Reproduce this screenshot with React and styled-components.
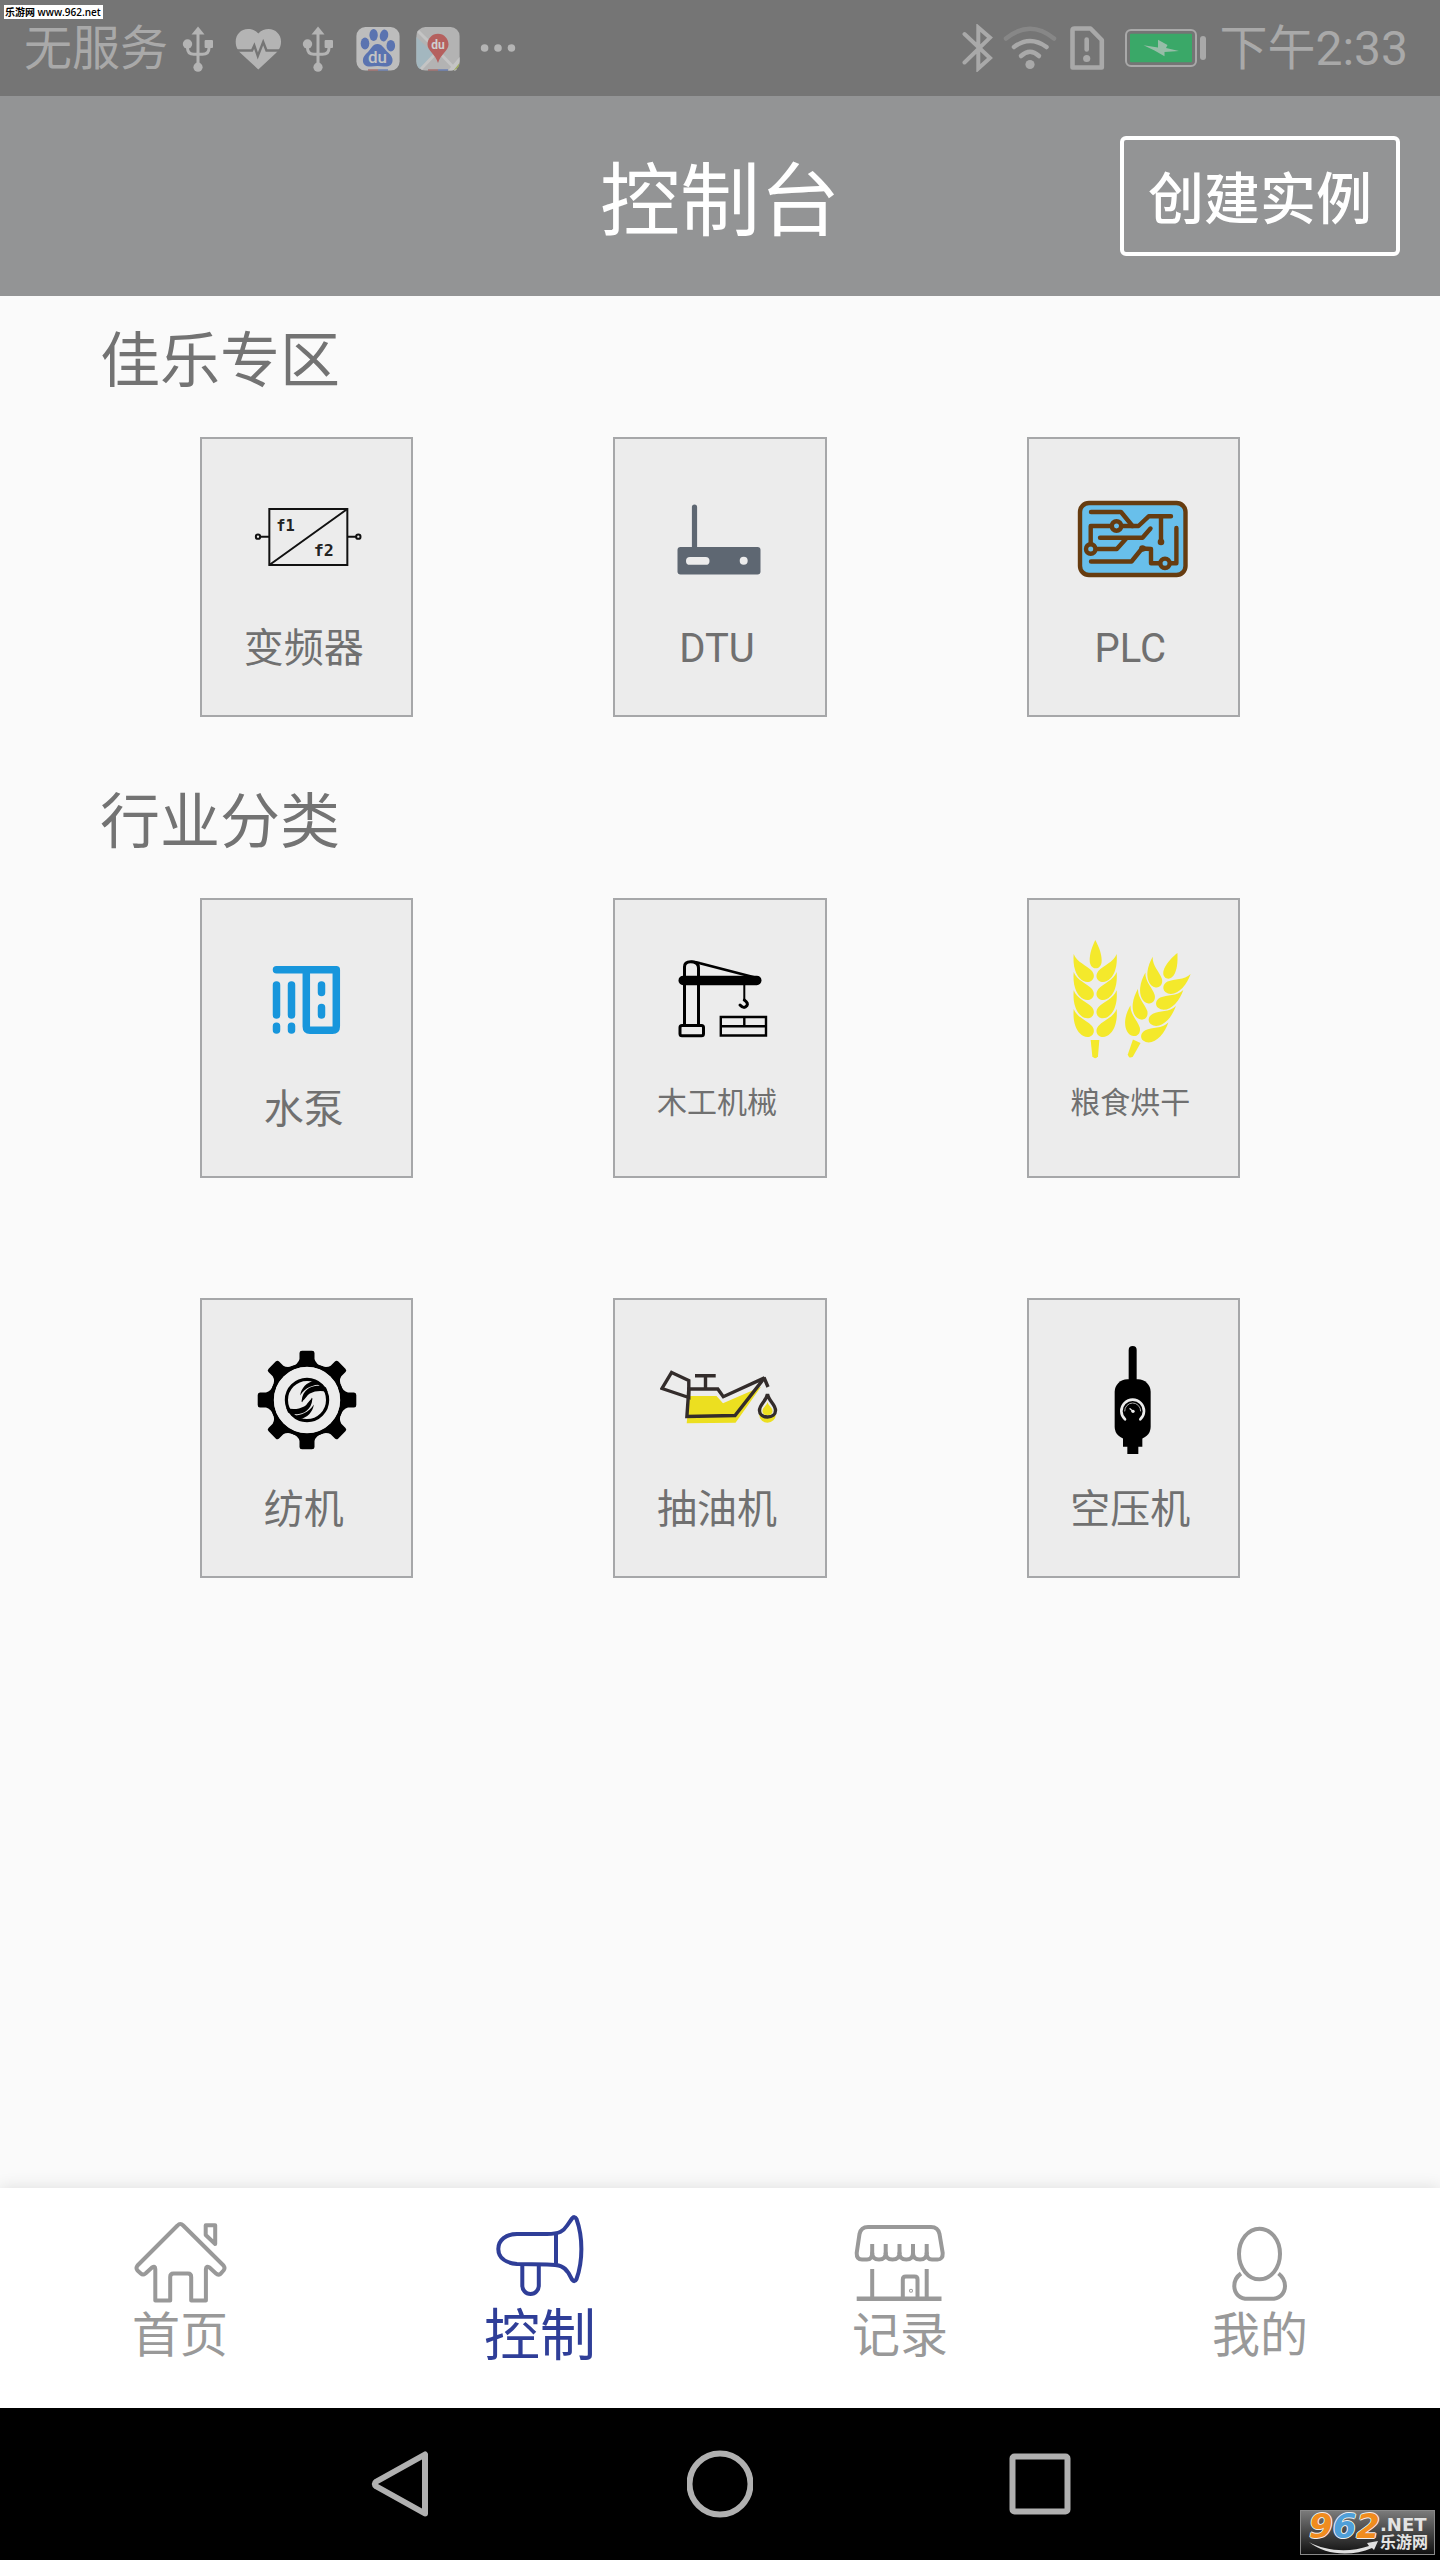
import React, { useState } from 'react';
import styled, { createGlobalStyle } from 'styled-components';

const GlobalStyle = createGlobalStyle`
    body {
        margin: 0;
        background-color: #fafafa;
        font-family: Roboto, "Noto Sans CJK SC", sans-serif;
    }
    button {
        font-family: inherit;
        cursor: pointer;
    }
`;

/* ---------- status bar icons ---------- */
function UsbIcon() {
    return (
        <StatusIcon width="48" height="48" viewBox="0 0 48 48">
            <path d="M24 2.5L30.5 10.5H17.5Z" fill="#b4b4b4" />
            <path d="M24 8V42M13.5 20V24Q13.5 30.3 20 30.3H28.5Q35 30.3 35 24V20" fill="none" stroke="#b4b4b4" strokeWidth="3" />
            <circle cx="13.5" cy="20" r="4.7" fill="#b4b4b4" />
            <rect x="30.6" y="16" width="8.4" height="8" rx="1" fill="#b4b4b4" />
            <circle cx="24" cy="43.2" r="4.6" fill="#b4b4b4" />
        </StatusIcon>
    );
}
function HeartIcon() {
    return (
        <StatusIcon width="48" height="48" viewBox="0 0 48 48">
            <path d="M24.3 9.5C21 6 17.5 5 14 5C7 5 1.7 10.5 1.7 17.5C1.7 23 3.5 26 7 29.5L24.3 45.5L41.5 29.5C45 26 47 23 47 17.5C47 10.5 41.5 5 34.5 5C31 5 27.5 6 24.3 9.5Z" fill="#b4b4b4" />
            <path d="M0 26.5H18L20.3 21.5L23.8 32L29.2 18L32.5 26.5H48" fill="none" stroke="#757575" strokeWidth="2.4" />
        </StatusIcon>
    );
}
function BaiduIcon() {
    return (
        <StatusIcon width="48" height="48" viewBox="0 0 48 48">
            <rect x="2.4" y="3" width="43.2" height="43.6" rx="9" fill="#bdbdbd" />
            <ellipse cx="11" cy="19.5" rx="4.3" ry="6" fill="#5a73b0" />
            <ellipse cx="19.6" cy="11" rx="4.2" ry="6" fill="#5a73b0" />
            <ellipse cx="30" cy="11.5" rx="4.2" ry="6" fill="#5a73b0" transform="rotate(12 30 11.5)" />
            <ellipse cx="36.8" cy="21.7" rx="4.3" ry="5.8" fill="#5a73b0" />
            <path d="M23.5 20C28 20 30 24.5 33 27.5C37 31 39 33.5 38.5 37C38 41.5 34.5 43 30 42.5C26 41.8 21 41.8 17 42.5C12.5 43 9 41 8.9 36.5C8.9 33 11 31 14 28C17 25 18.5 20 23.5 20Z" fill="#5a73b0" />
            <text x="23.5" y="39" fontSize="17" fontWeight="500" textAnchor="middle" fill="#c4c4c4">du</text>
            <path d="M14 46H24" stroke="#a0605f" strokeWidth="1.2" />
            <path d="M24 46H34" stroke="#5a73b0" strokeWidth="1.2" />
        </StatusIcon>
    );
}
function BaiduMapIcon() {
    return (
        <StatusIcon width="48" height="48" viewBox="0 0 48 48">
            <rect x="2.4" y="3" width="43.2" height="43.6" rx="9" fill="#b3b3b3" />
            <path d="M2.4 13L20 30L6 45Q2.4 43 2.4 37Z" fill="#a3b7bf" />
            <path d="M4 7L24 27L42 46M24 27L7 45" fill="none" stroke="#c4c4c4" strokeWidth="3" />
            <path d="M45.6 33L34 46.6H38Q45.6 45 45.6 37Z" fill="#c4c4c4" />
            <path d="M45.5 39Q45 44.5 39.5 46.5Z" fill="#9dab5e" />
            <path d="M24 9.7C30 9.7 34.5 14.5 34.5 20.5C34.5 27 26.5 30 24 39C21.5 30 13.5 27 13.5 20.5C13.5 14.5 18 9.7 24 9.7Z" fill="#b5605e" />
            <text x="24" y="24.5" fontSize="12" fontWeight="700" textAnchor="middle" fill="#cfcfcf">du</text>
            <path d="M14 46H24" stroke="#a0605f" strokeWidth="1.2" />
            <path d="M24 46H34" stroke="#5a73b0" strokeWidth="1.2" />
        </StatusIcon>
    );
}
function MoreIcon() {
    return (
        <StatusIcon width="48" height="48" viewBox="0 0 48 48" fill="#b4b4b4">
            <circle cx="10.6" cy="24" r="3.8" />
            <circle cx="24" cy="24" r="3.8" />
            <circle cx="37.4" cy="24" r="3.8" />
        </StatusIcon>
    );
}
function BluetoothIcon() {
    return (
        <StatusIcon width="48" height="48" viewBox="0 0 48 48">
            <path d="M11.5 10L37 34L25.3 44.5V3.5L37 13.7L11.5 38.5" fill="none" stroke="#a9a9a9" strokeWidth="4" strokeLinecap="round" />
        </StatusIcon>
    );
}
function WifiIcon() {
    return (
        <StatusIcon width="58" height="48" viewBox="0 0 58 48">
            <g fill="none" strokeWidth="4.5" strokeLinecap="round">
                <path d="M5 14.5Q29 -5 53 14.5" stroke="#878787" />
                <path d="M13 23Q29 11 45.5 23" stroke="#a9a9a9" />
                <path d="M20 32Q29 23.5 38 32" stroke="#a9a9a9" />
            </g>
            <circle cx="29" cy="40.5" r="4.6" fill="#a9a9a9" />
        </StatusIcon>
    );
}
function SimIcon() {
    return (
        <StatusIcon width="56" height="48" viewBox="0 0 56 48">
            <path d="M15.5 4.5H31.5L42.8 16V43.5H13.5V6.5Q13.5 4.5 15.5 4.5Z" fill="none" stroke="#a9a9a9" strokeWidth="4.6" strokeLinejoin="round" />
            <path d="M27.7 15.5V25.5" stroke="#a9a9a9" strokeWidth="4.6" strokeLinecap="round" />
            <circle cx="27.7" cy="34.5" r="3.6" fill="#a9a9a9" />
        </StatusIcon>
    );
}
function BatteryIcon() {
    return (
        <StatusIcon width="100" height="48" viewBox="0 0 100 48">
            <rect x="11" y="6" width="70" height="36" rx="5" fill="none" stroke="#a9a9a9" strokeWidth="2" />
            <rect x="15" y="9.7" width="62" height="28.5" rx="1" fill="#3aa868" />
            <path d="M28.5 21.3L43 23.5V15.7L52.5 21L51 24L64 27L49.5 28V32.2L39.5 26.5Z" fill="#97bda8" />
            <rect x="85" y="12" width="6" height="24" rx="3" fill="#a9a9a9" />
        </StatusIcon>
    );
}

/* ---------- category icons ---------- */
function InverterIcon() {
    return (
        <CardIcon viewBox="170 147 360 360">
            <g fill="none" stroke="#111" strokeWidth="6">
                <rect x="237" y="237" width="234" height="168" />
                <path d="M237 405L471 237M210 320H237M471 320H497" />
                <circle cx="203" cy="320" r="6.5" />
                <circle cx="504" cy="320" r="6.5" />
            </g>
            <text x="258" y="304" fontFamily="DejaVu Sans Mono" fontWeight="700" fontSize="46" fill="#222">f1</text>
            <text x="370" y="379" fontFamily="DejaVu Sans Mono" fontWeight="700" fontSize="50" fill="#222">f2</text>
        </CardIcon>
    );
}
function RouterIcon() {
    return (
        <CardIcon viewBox="0 0 120 120">
            <path d="M34.5 28V72" stroke="#5e6772" strokeWidth="5.2" strokeLinecap="round" />
            <rect x="17.5" y="68" width="83" height="27.5" rx="3" fill="#5e6772" />
            <rect x="26" y="78" width="23.5" height="7.8" rx="3.9" fill="#ececec" />
            <circle cx="83.7" cy="81.7" r="4" fill="#ececec" />
        </CardIcon>
    );
}
function CircuitIcon() {
    return (
        <CardIcon viewBox="0 0 120 120">
            <g fill="none" stroke="#663c10" strokeWidth="4.4" strokeLinecap="round" strokeLinejoin="round">
                <rect x="7" y="24" width="105.5" height="72" rx="9" fill="#68bfeb" />
                <path d="M18 33H48L59.5 47" />
                <path d="M17.7 65V47H38M49 47H65.5L75.7 37.3H98M88 37.3V62.5" />
                <path d="M27 58.7H69.5L77.5 49.5M23 70H43.8L53.2 59.5" />
                <path d="M18 82.5H58.5L69 69.5L78 70V84.3H87M97 84.3H103.4V49" />
                <circle cx="43.5" cy="47" r="4.7" />
                <circle cx="17.7" cy="70" r="4.7" />
                <circle cx="92" cy="84.3" r="4.7" />
            </g>
            <circle cx="88" cy="63" r="3.3" fill="#663c10" />
            <circle cx="69.5" cy="69.5" r="3.3" fill="#663c10" />
        </CardIcon>
    );
}
function PumpIcon() {
    return (
        <CardIcon viewBox="0 0 120 120">
            <g fill="none" stroke="#1796dc" strokeWidth="7.5" strokeLinecap="round" strokeLinejoin="round">
                <path d="M29.5 29.8H89.3V86.5Q89.3 90.2 85.5 90.2H63Q59.3 90.2 59.3 86.5V30" />
                <path d="M29.5 45V75M44.5 45V75M29.5 86.2V90M44.5 86.2V90M74.5 45V52.5M74.5 67.5V75" />
            </g>
        </CardIcon>
    );
}
function CraneIcon() {
    return (
        <CardIcon viewBox="0 0 120 120">
            <g fill="none" stroke="#000" strokeWidth="3">
                <path d="M24.5 85V27Q24.5 21.8 30.5 21.8Q38.5 21.8 38.5 28V85" />
                <path d="M31 21.8Q36 21.5 40 23.3L97 38" strokeWidth="2.6" />
                <rect x="20" y="85.5" width="23.5" height="10.3" rx="2" />
                <path d="M84.3 45V60" strokeWidth="2" />
                <path d="M84.3 60Q88.5 63 87 65.5Q84 69.5 80 65" strokeLinecap="round" />
                <path d="M60.8 77H106V95.5H60.8ZM60.8 86.2H106M84.3 77V86" strokeWidth="2.4" />
            </g>
            <rect x="18.5" y="35.7" width="83" height="9.5" rx="4.7" />
        </CardIcon>
    );
}
function WheatLeaf({ y }) {
    return (
        <path
            transform={`translate(0 ${y})`}
            d="M222 192C232 218 262 226 277 243C287 256 283 271 270 275C250 280 234 262 227 242C221 225 221 208 222 192Z"
        />
    );
}
function WheatEar() {
    const rows = [0, 54, 109, 165];
    return (
        <g>
            <path d="M287 150C297 170 306 190 306 212C306 226 298 235 288 235C278 235 270 226 270 210C270 190 278 168 287 150Z" />
            {rows.map((y) => <WheatLeaf key={y} y={y} />)}
            <g transform="translate(573 0) scale(-1 1)">
                {rows.map((y) => <WheatLeaf key={y} y={y} />)}
            </g>
            <path d="M273 450H299L295 499Q287 511 278 499Z" />
        </g>
    );
}
function WheatIcon() {
    return (
        <CardIcon viewBox="220 150 360 360" fill="#f4e92b">
            <WheatEar />
            <g transform="translate(459 200) rotate(24.6) scale(0.97) translate(-222 -192)">
                <WheatEar />
            </g>
        </CardIcon>
    );
}
function GearIcon() {
    const teeth = [0, 45, 90, 135, 180, 225, 270, 315];
    const half = (
        <g>
            <path d="M-6.8 -4.5C-6 -12 0 -18 7 -19L16 -15.5C8 -16 -2 -13 -6.8 -4.5Z" />
            <path d="M-5 2.5C-6 -6 0 -13 8 -14C12 -14.5 16 -14 19 -12.5L20.5 -8C12 -10.5 0 -9 -5 2.5Z" />
            <path d="M-3 9C1 8 5 4 5.5 -2C1 2 -1 5 -3 9Z" />
        </g>
    );
    return (
        <CardIcon viewBox="-60 -60 120 120">
            {teeth.map((deg) => (
                <path
                    key={deg}
                    transform={`rotate(${deg})`}
                    d="M-16 -33Q-8.5 -36 -7.5 -41V-47Q-7.5 -49.3 -5 -49.3H5Q7.5 -49.3 7.5 -47V-41Q8.5 -36 16 -33Z"
                />
            ))}
            <circle r="35" fill="none" stroke="#000" strokeWidth="4" />
            <circle r="33.2" fill="#ececec" />
            <circle r="20.6" fill="none" stroke="#000" strokeWidth="3.2" />
            {half}
            <g transform="rotate(180)">{half}</g>
        </CardIcon>
    );
}
function OilIcon() {
    return (
        <CardIcon viewBox="0 0 120 120">
            <path d="M29.5 56H56.5L63 63.3L101 46.7L75.5 82.7L26.7 83.3Z" fill="#ecdf20" />
            <circle cx="107.5" cy="74.5" r="8.3" fill="#ecdf20" />
            <g fill="none" stroke="#332c2b" strokeWidth="3.4">
                <path d="M11.6 32.5L28.8 40.5V57.5L2 48.5Z" />
                <path d="M28.8 49H57.8L63.3 56.7L104.5 37.8L75 75.5L26.9 76.5Z" />
                <path d="M104 37.5L108 47M35 35.8H55.7M45.5 36V49" />
                <path d="M107.5 54C108.5 61 115.5 64 115.5 70.5C115.5 74.5 112 77 107.5 77C103 77 99.5 74.5 99.5 70.5C99.5 64 106.5 61 107.5 54Z" fill="#ececec" />
            </g>
            <path d="M107.5 62C108.5 66 113 68 112.5 71.5C112 74.5 110 75 107.5 75C105 75 103 74.5 102.5 71.5C102 68 106.5 66 107.5 62Z" fill="#ecdf20" />
        </CardIcon>
    );
}
function CompressorIcon() {
    return (
        <CardIcon viewBox="220 150 360 360">
            <path d="M399 180V280" stroke="#000" strokeWidth="24" strokeLinecap="round" />
            <rect x="345" y="268" width="108" height="180" rx="38" />
            <path d="M370 430H428V470H416V492H383V470H370Z" />
            <g fill="none" stroke="#ececec" strokeLinecap="round">
                <path d="M376 388A34 34 0 1 1 422 388" strokeWidth="8" />
                <path d="M375 363A24 24 0 0 1 423 363" strokeWidth="3" stroke="#aaa" />
                <path d="M391 356L399 363" strokeWidth="4" />
            </g>
            <circle cx="400" cy="364" r="5" fill="#ececec" />
        </CardIcon>
    );
}

/* ---------- tab icons ---------- */
function HomeIcon() {
    return (
        <TabIcon viewBox="0 0 96 96">
            <path d="M45.5 13.5Q48.3 10.5 51.2 13.5L91.5 53.5Q93.5 56 91.5 58.5L88.5 61.8Q86.2 63.5 84 61.5L77.5 55.5Q74 53.5 73.9 57V88.5H59.2V65Q59.2 61.5 56 61.5H41.5Q38.2 61.5 38.2 65V88.5H23.3V57Q23.3 53.5 20 55.5L13.5 61.5Q11 63.5 8.8 61.5L5.5 58.5Q3.5 56 5.5 53.5Z" />
            <path d="M73.7 13.2H83.2V32L73.7 23Z" />
        </TabIcon>
    );
}
function HornIcon() {
    return (
        <TabIcon viewBox="0 0 96 96">
            <path d="M6.3 43C6.3 34 14 28 25 28H55C68 28 71.5 25 75.5 19L80 12.5Q82.5 9.5 84.5 13C91 31 91 55 84.5 73Q82.5 77 80 73.5L76.5 67C72.5 60.5 68 58.5 55 58.5L25 58C14 57 6.3 52 6.3 43Z" />
            <path d="M64 27.5V59M30.3 58.5V79.5C30.3 84 33.5 88 38.5 88C43.5 88 46.8 84 46.8 79.5V58.5" />
        </TabIcon>
    );
}
function StoreIcon() {
    return (
        <TabIcon viewBox="0 0 96 96">
            <path d="M16 15H79Q86 15 87.5 22L90.7 41Q91 47.5 85.5 47.5H80Q74.7 47.5 74.7 41Q74.7 47.5 68 47.5Q61 47.5 61 41Q61 47.5 54.3 47.5Q47.5 47.5 47.5 41Q47.5 47.5 40.5 47.5Q33.7 47.5 33.7 41Q33.7 47.5 27 47.5Q20.2 47.5 20.2 41Q20.2 47.5 15 47.5H10Q4.5 47.5 4.7 41L7.5 22Q9 15 16 15Z" />
            <path d="M20.2 32V42M33.7 32V42M47.5 32V42M61 32V42M74.7 32V42M20.2 57V86M74.7 57V86M50.8 86V67.5Q50.8 64.5 53.8 64.5H62.5Q65.5 64.5 65.5 67.5V86" />
            <path d="M4.7 86.7H89.5" strokeWidth="4.5" />
            <circle cx="59" cy="78.7" r="0.5" strokeWidth="3" />
        </TabIcon>
    );
}
function PersonIcon() {
    return (
        <TabIcon viewBox="0 0 96 96">
            <ellipse cx="47.5" cy="42" rx="20.5" ry="25.3" />
            <path d="M29 61.5C24 65 22.3 69 22.3 74C22.3 82 28 86.8 36 86.8H59C67 86.8 73 82 73 74C73 69 71 65 66.5 61.5" />
        </TabIcon>
    );
}

const areas = [
    {
        title: '佳乐专区',
        items: [
            { name: '变频器', icon: <InverterIcon /> },
            { name: 'DTU', icon: <RouterIcon /> },
            { name: 'PLC', icon: <CircuitIcon /> },
        ],
    },
    {
        title: '行业分类',
        items: [
            { name: '水泵', icon: <PumpIcon /> },
            { name: '木工机械', icon: <CraneIcon />, small: true },
            { name: '粮食烘干', icon: <WheatIcon />, small: true },
            { name: '纺机', icon: <GearIcon /> },
            { name: '抽油机', icon: <OilIcon /> },
            { name: '空压机', icon: <CompressorIcon /> },
        ],
    },
];

const tabs = [
    { name: '首页', icon: <HomeIcon /> },
    { name: '控制', icon: <HornIcon /> },
    { name: '记录', icon: <StoreIcon /> },
    { name: '我的', icon: <PersonIcon /> },
];

function App() {
    const [current, setCurrent] = useState('控制');
    return (
        <Page>
            <GlobalStyle />
            <StatusBar>
                <SiteTag>乐游网 www.962.net</SiteTag>
                <StatusGroup>
                    <StatusText>无服务</StatusText>
                    <Notices>
                        <UsbIcon />
                        <HeartIcon />
                        <UsbIcon />
                        <BaiduIcon />
                        <BaiduMapIcon />
                        <MoreIcon />
                    </Notices>
                </StatusGroup>
                <StatusGroup>
                    <BluetoothIcon />
                    <WifiIcon />
                    <SimIcon />
                    <BatteryIcon />
                    <StatusText>下午2:33</StatusText>
                </StatusGroup>
            </StatusBar>
            <Header>
                <Title>控制台</Title>
                <CreateButton>创建实例</CreateButton>
            </Header>
            <Content>
                {areas.map((area) => (
                    <Area key={area.title}>
                        <AreaTitle>{area.title}</AreaTitle>
                        <CardGrid>
                            {area.items.map((item) => (
                                <Card key={item.name}>
                                    {item.icon}
                                    <CardName $small={item.small}>{item.name}</CardName>
                                </Card>
                            ))}
                        </CardGrid>
                    </Area>
                ))}
            </Content>
            <TabBar>
                {tabs.map((tab) => (
                    <Tab key={tab.name} $active={tab.name === current} onClick={() => setCurrent(tab.name)}>
                        {tab.icon}
                        <TabName $active={tab.name === current}>{tab.name}</TabName>
                    </Tab>
                ))}
            </TabBar>
            <SystemBar>
                <SystemKey aria-label="返回">
                    <svg width="66" height="72" viewBox="0 0 66 72"><path d="M58 6.5V65.5L9.5 38.5Q6 36 9.5 33.5Z" /></svg>
                </SystemKey>
                <SystemKey aria-label="主屏幕">
                    <svg width="66" height="72" viewBox="0 0 66 72"><circle cx="33" cy="36" r="30.5" /></svg>
                </SystemKey>
                <SystemKey aria-label="最近任务">
                    <svg width="66" height="72" viewBox="0 0 66 72"><rect x="5.5" y="8.5" width="55" height="55" rx="2" /></svg>
                </SystemKey>
                <SiteLogo>
                    <LogoMark>
                        <LogoNumber>
                            <LogoDigit $color="#f08c1e">9</LogoDigit>
                            <LogoDigit $color="#4f9fd8">6</LogoDigit>
                            <LogoDigit $color="#f08c1e">2</LogoDigit>
                        </LogoNumber>
                        <svg width="70" height="13" viewBox="0 0 70 13">
                            <path d="M0 1C16 10 40 12 60 5L58 2L69 0L65 9L63 7C42 16 16 14 0 1Z" fill="#e0e0e0" />
                        </svg>
                    </LogoMark>
                    <LogoWords>
                        <LogoWord $size="18px">.NET</LogoWord>
                        <LogoWord $size="16px">乐游网</LogoWord>
                    </LogoWords>
                </SiteLogo>
            </SystemBar>
        </Page>
    );
}

const Page = styled.div`
    display: flex;
    flex-direction: column;
    min-height: 100vh;
`;
const StatusBar = styled.div`
    position: relative;
    display: flex;
    justify-content: space-between;
    height: 96px;
    padding: 0 32px 0 24px;
    background-color: #757575;
`;
const StatusGroup = styled.div`
    display: flex;
    align-items: center;
`;
const StatusText = styled.span`
    padding-top: 2px;
    color: #a9a9a9;
    font-size: 48px;
    font-weight: 400;
    line-height: 56px;
    margin: 0 0 0 4px;
    &:first-child {
        margin: 0 6px 0 0;
    }
`;
const StatusIcon = styled.svg`
    flex: none;
`;
const Notices = styled.div`
    display: flex;
    gap: 12px;
`;
const SiteTag = styled.span`
    position: absolute;
    top: 5px;
    left: 4px;
    padding: 0 2px 0 1px;
    background-color: white;
    color: black;
    font-family: "Open Sans", "Noto Sans CJK SC", sans-serif;
    font-size: 10px;
    font-weight: 600;
    line-height: 14px;
`;
const Header = styled.header`
    display: grid;
    grid-template-columns: 1fr auto 1fr;
    align-items: center;
    height: 200px;
    padding: 0 40px;
    background-color: #939495;
`;
const Title = styled.h1`
    grid-column: 2;
    margin: 0;
    padding-top: 12px;
    color: white;
    font-size: 80px;
    font-weight: 400;
    line-height: 96px;
`;
const CreateButton = styled.button`
    justify-self: end;
    height: 120px;
    padding: 0 24px 4px;
    border: 4px solid white;
    border-radius: 6px;
    background: none;
    color: white;
    font-size: 56px;
    font-weight: 500;
`;
const Content = styled.main`
    flex: 1;
    background-color: #fafafa;
`;
const Area = styled.section`
    padding-bottom: 40px;
`;
const AreaTitle = styled.h2`
    margin: 0;
    padding: 30px 100px 39px;
    color: #737373;
    font-size: 60px;
    font-weight: 400;
    line-height: 72px;
`;
const CardGrid = styled.div`
    display: grid;
    grid-template-columns: repeat(3, 1fr);
    gap: 120px 200px;
    padding: 0 200px;
`;
const Card = styled.button`
    display: flex;
    flex-direction: column;
    align-items: center;
    height: 280px;
    padding: 40px 0 0;
    border: 2px solid #a6a7a9;
    background-color: #ececec;
`;
const CardIcon = styled.svg`
    flex: none;
    width: 120px;
    height: 120px;
    margin-bottom: 26px;
`;
const CardName = styled.span`
    padding-right: 6px;
    color: #707070;
    font-size: ${(props) => (props.$small ? '30px' : '40px')};
    line-height: ${(props) => (props.$small ? '34px' : '48px')};
    white-space: nowrap;
`;
const TabBar = styled.nav`
    position: relative;
    display: grid;
    grid-template-columns: repeat(4, 1fr);
    height: 220px;
    background-color: white;
    box-shadow: 0 0 16px rgba(0, 0, 0, 0.12);
`;
const Tab = styled.button`
    display: flex;
    flex-direction: column;
    align-items: center;
    padding: ${(props) => (props.$active ? '18px 0 0' : '24px 0 0')};
    border: 0;
    background: none;
    color: ${(props) => (props.$active ? '#2f3e98' : '#999')};
`;
const TabIcon = styled.svg`
    flex: none;
    width: 96px;
    height: 96px;
    margin-bottom: 2px;
    fill: none;
    stroke: currentColor;
    stroke-width: 4;
    stroke-linejoin: round;
`;
const TabName = styled.span`
    font-size: ${(props) => (props.$active ? '56px' : '48px')};
    line-height: ${(props) => (props.$active ? '64px' : '52px')};
`;
const SystemBar = styled.footer`
    position: relative;
    display: grid;
    grid-template-columns: repeat(3, 1fr);
    height: 152px;
    padding: 0 16.666%;
    background-color: black;
`;
const SystemKey = styled.button`
    display: flex;
    align-items: center;
    justify-content: center;
    padding: 0;
    border: 0;
    background: none;
    svg {
        fill: none;
        stroke: #b0b0b0;
        stroke-width: 6;
        stroke-linejoin: round;
    }
`;
const SiteLogo = styled.div`
    position: absolute;
    right: 5px;
    bottom: 5px;
    display: flex;
    box-sizing: border-box;
    width: 135px;
    height: 45px;
    padding-left: 8px;
    border: 1px solid #8a8a8a;
    background-image: linear-gradient(#7a7a7a, #111);
    font-family: "DejaVu Sans", "Noto Sans CJK SC", sans-serif;
    font-weight: 700;
`;
const LogoMark = styled.span`
    display: flex;
    flex-direction: column;
    width: 71px;
`;
const LogoNumber = styled.span`
    font-size: 34px;
    font-style: italic;
    line-height: 30px;
    text-shadow: 1px 0 0 #eee, -1px 0 0 #eee, 0 1px 0 #eee, 0 -1px 0 #eee;
`;
const LogoDigit = styled.span`
    color: ${(props) => props.$color};
`;
const LogoWords = styled.span`
    display: flex;
    flex-direction: column;
    padding-top: 5px;
    color: #e4e4e4;
`;
const LogoWord = styled.span`
    font-size: ${(props) => props.$size};
    line-height: 18px;
`;

export default App;
